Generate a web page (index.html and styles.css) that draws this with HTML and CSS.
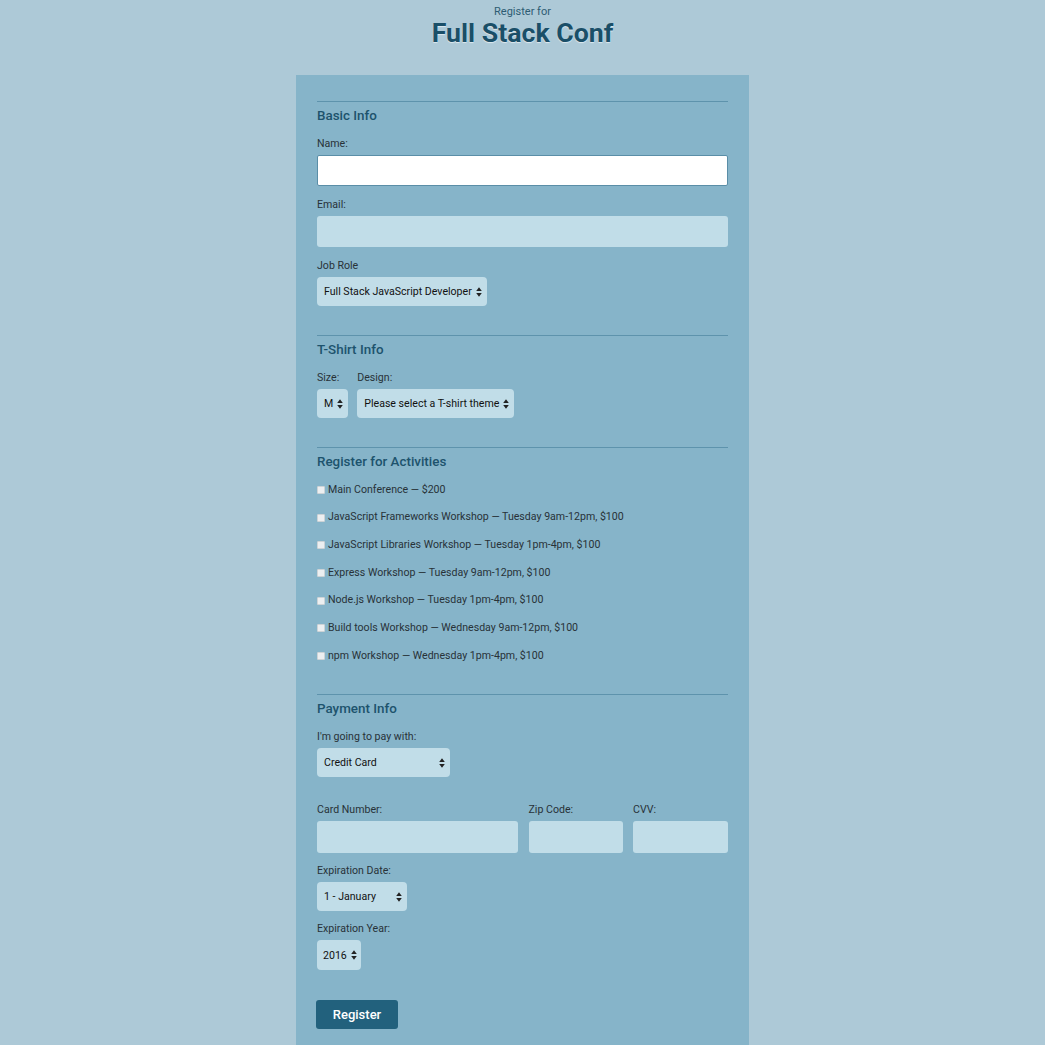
FILE: index.html
```html
<!DOCTYPE html>
<html>
<head>
<meta charset="utf-8">
<title>Full Stack Conf</title>
<link rel="stylesheet" href="styles.css">
</head>
<body>
<header class="header">
  <span class="pre">Register for</span>
  <h1 class="title">Full Stack Conf</h1>
</header>
<form class="form">
  <section class="section">
    <h2 class="legend">Basic Info</h2>
    <label class="label">Name:</label>
    <div class="input input-white"></div>
    <label class="label">Email:</label>
    <div class="input"></div>
    <label class="label">Job Role</label>
    <div class="select">Full Stack JavaScript Developer<svg class="arrow" viewBox="0 0 6 10"><path d="M3 0.3 L5.8 4 H0.2 Z M3 9.7 L5.8 6 H0.2 Z"/></svg></div>
  </section>

  <section class="section">
    <h2 class="legend">T-Shirt Info</h2>
    <div class="row">
      <div class="col">
        <label class="label">Size:</label>
        <div class="select">M<svg class="arrow" viewBox="0 0 6 10"><path d="M3 0.3 L5.8 4 H0.2 Z M3 9.7 L5.8 6 H0.2 Z"/></svg></div>
      </div>
      <div class="col">
        <label class="label">Design:</label>
        <div class="select">Please select a T-shirt theme<svg class="arrow" viewBox="0 0 6 10"><path d="M3 0.3 L5.8 4 H0.2 Z M3 9.7 L5.8 6 H0.2 Z"/></svg></div>
      </div>
    </div>
  </section>

  <section class="section">
    <h2 class="legend">Register for Activities</h2>
    <div class="activities">
      <label class="activity"><span class="box"></span>Main Conference — $200</label>
      <label class="activity"><span class="box"></span>JavaScript Frameworks Workshop — Tuesday 9am-12pm, $100</label>
      <label class="activity"><span class="box"></span>JavaScript Libraries Workshop — Tuesday 1pm-4pm, $100</label>
      <label class="activity"><span class="box"></span>Express Workshop — Tuesday 9am-12pm, $100</label>
      <label class="activity"><span class="box"></span>Node.js Workshop — Tuesday 1pm-4pm, $100</label>
      <label class="activity"><span class="box"></span>Build tools Workshop — Wednesday 9am-12pm, $100</label>
      <label class="activity"><span class="box"></span>npm Workshop — Wednesday 1pm-4pm, $100</label>
    </div>
  </section>

  <section class="section section-last">
    <h2 class="legend">Payment Info</h2>
    <label class="label">I'm going to pay with:</label>
    <div class="select select-pay">Credit Card<svg class="arrow" viewBox="0 0 6 10"><path d="M3 0.3 L5.8 4 H0.2 Z M3 9.7 L5.8 6 H0.2 Z"/></svg></div>
    <div class="card-row">
      <div class="col col-card">
        <label class="label">Card Number:</label>
        <div class="input input-card"></div>
      </div>
      <div class="col col-zip">
        <label class="label">Zip Code:</label>
        <div class="input input-card"></div>
      </div>
      <div class="col col-cvv">
        <label class="label">CVV:</label>
        <div class="input input-card"></div>
      </div>
    </div>
    <label class="label">Expiration Date:</label>
    <div class="select select-month">1 - January<svg class="arrow" viewBox="0 0 6 10"><path d="M3 0.3 L5.8 4 H0.2 Z M3 9.7 L5.8 6 H0.2 Z"/></svg></div>
    <label class="label">Expiration Year:</label>
    <div class="select select-year">2016<svg class="arrow" viewBox="0 0 6 10"><path d="M3 0.3 L5.8 4 H0.2 Z M3 9.7 L5.8 6 H0.2 Z"/></svg></div>
    <button type="button" class="button">Register</button>
  </section>
</form>
</body>
</html>
```

FILE: styles.css
```css
* { box-sizing: border-box; }

html, body {
  margin: 0;
  padding: 0;
  background: #adc9d7;
  font-family: Roboto, "Liberation Sans", sans-serif;
  color: #283238;
}

.header {
  display: flex;
  flex-direction: column;
  align-items: center;
  padding-top: 6px;
  height: 75px;
}

.pre {
  font-size: 11px;
  line-height: 12px;
  color: #2e5c73;
}

.title {
  margin: 0;
  font-size: 26.7px;
  line-height: 31px;
  font-weight: 700;
  color: #1a4f68;
  text-shadow: 0 1px 1px rgba(255, 255, 255, 0.6);
}

.form {
  display: block;
  width: 453px;
  margin: 0 auto;
  padding: 26px 21px 16px;
  background: #86b4c9;
}

.section {
  display: flex;
  flex-direction: column;
  align-items: flex-start;
  border-top: 1px solid #5e93ac;
  padding-top: 6px;
  margin-bottom: 29px;
}

.section-last { margin-bottom: 0; }

.legend {
  margin: 0 0 14px;
  font-size: 13.4px;
  line-height: 16px;
  font-weight: 500;
  color: #1d536d;
}

.label {
  display: block;
  font-size: 10.6px;
  line-height: 12px;
  color: #283238;
  margin-bottom: 5px;
}

.input {
  width: 100%;
  height: 31px;
  background: #c1dde8;
  border-radius: 3px;
  margin-bottom: 13px;
}

.input-white {
  background: #ffffff;
  border: 1px solid #5a8ea7;
  border-radius: 2px;
}

.select {
  display: flex;
  align-items: center;
  justify-content: space-between;
  gap: 4px;
  height: 29px;
  padding: 0 5px 0 7px;
  background: #c1dde8;
  border-radius: 4px;
  font-size: 10.6px;
  color: #111;
  white-space: nowrap;
}

.arrow {
  width: 6px;
  height: 10px;
  fill: #222;
  flex: none;
}

.row {
  display: flex;
  gap: 9px;
}

.col {
  display: flex;
  flex-direction: column;
  align-items: flex-start;
}

.activities {
  display: flex;
  flex-direction: column;
  gap: 13.7px;
  margin-top: -2px;
  margin-bottom: 3px;
}

.activity {
  display: flex;
  align-items: center;
  height: 14px;
  font-size: 10.6px;
  color: #283238;
}

.box {
  width: 8px;
  height: 8px;
  margin: 2px 3px 0 0;
  background: #eceff1;
  border: 1px solid #cdd3d6;
  border-radius: 1px;
}

.select-pay { width: 133px; margin-bottom: 27px; }
.select-month { width: 90px; margin-bottom: 12px; }
.select-year { height: 30px; padding-right: 4px; padding-left: 6px; margin-bottom: 30px; }

.card-row {
  display: flex;
  width: 100%;
  gap: 10.5px;
}

.col-card { width: 201px; }
.col-zip { width: 94px; }
.col-cvv { width: 95px; }

.input-card {
  height: 32px;
  margin-bottom: 12px;
}

.button {
  margin-left: -1px;
  width: 82px;
  height: 29px;
  border: none;
  border-radius: 3px;
  background: #22617d;
  color: #ffffff;
  font-family: Roboto, "Liberation Sans", sans-serif;
  font-size: 13px;
  font-weight: 500;
  cursor: pointer;
}
```
